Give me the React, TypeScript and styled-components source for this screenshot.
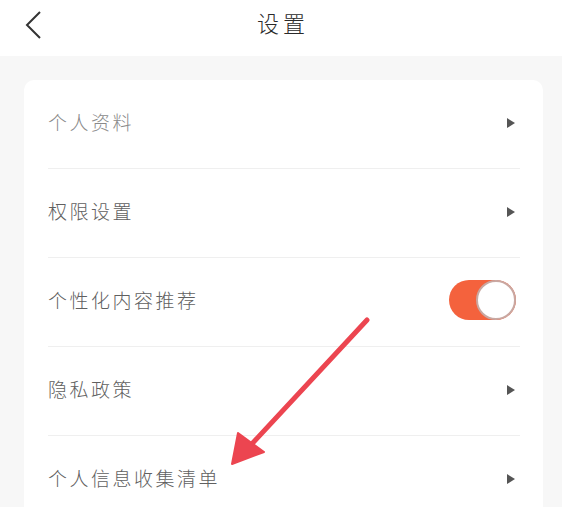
import * as React from 'react';
import styled, { createGlobalStyle } from 'styled-components';

const GlobalStyle = createGlobalStyle`
    html, body {
        margin: 0;
        padding: 0;
        background: #f7f7f7;
    }
    body {
        font-family: 'Noto Sans CJK SC', 'Noto Sans', sans-serif;
    }
`;

const Page = styled.div`
    position: relative;
    width: 562px;
    height: 507px;
    overflow: hidden;
    background: #f7f7f7;
`;

const Header = styled.header`
    height: 56px;
    background: #fff;
    display: grid;
    grid-template-columns: 56px 1fr 56px;
    align-items: center;
`;

const BackButton = styled.button`
    border: none;
    background: none;
    padding: 0 0 0 24px;
    height: 56px;
    display: flex;
    align-items: center;
    margin-top: -6px;
    cursor: pointer;
`;

const Title = styled.h1`
    margin: 0;
    text-align: center;
    font-size: 22px;
    font-weight: 300;
    letter-spacing: 4px;
    padding-left: 4px;
    color: #2a2a2a;
    line-height: 1;
    margin-top: -12px;
`;

const Body = styled.main`
    padding: 24px 19px 0 24px;
`;

const Card = styled.section`
    background: #fff;
    border-radius: 10px;
    overflow: hidden;
`;

const Row = styled.div<{ $last?: boolean }>`
    height: 88px;
    display: flex;
    align-items: center;
    justify-content: space-between;
    padding: 0 28px 0 24px;
    border-bottom: ${p => (p.$last ? 'none' : '1px solid transparent')};
    position: relative;
    &::after {
        content: '';
        display: ${p => (p.$last ? 'none' : 'block')};
        position: absolute;
        left: 24px;
        right: 23px;
        bottom: -1px;
        height: 1px;
        background: #efefef;
    }
`;

const Label = styled.span<{ $faint?: boolean }>`
    font-size: 19px;
    font-weight: 300;
    letter-spacing: 2.5px;
    margin-top: -5px;
    color: ${p => (p.$faint ? '#8a8a8a' : '#606060')};
`;

const Caret = styled.span`
    width: 0;
    height: 0;
    border-top: 5px solid transparent;
    border-bottom: 5px solid transparent;
    border-left: 8px solid #555;
    margin-top: -2px;
`;

const Switch = styled.span<{ $on: boolean }>`
    width: 67px;
    height: 40px;
    border-radius: 20px;
    background: ${p => (p.$on ? '#f4623d' : '#e0e0e0')};
    display: flex;
    justify-content: ${p => (p.$on ? 'flex-end' : 'flex-start')};
    margin-right: -1px;
    margin-top: -4px;
`;

const Knob = styled.span`
    width: 40px;
    height: 40px;
    box-sizing: border-box;
    border-radius: 50%;
    background: #fff;
    border: 2px solid #c9a8a2;
`;

const Pointer = styled.svg`
    position: absolute;
    left: 0;
    top: 0;
    pointer-events: none;
`;

const items = [
    { label: '个人资料', kind: 'link', faint: true },
    { label: '权限设置', kind: 'link' },
    { label: '个性化内容推荐', kind: 'switch' },
    { label: '隐私政策', kind: 'link' },
    { label: '个人信息收集清单', kind: 'link' },
];

const App = () => {
    const [on, setOn] = React.useState(true);

    return (
        <Page>
            <GlobalStyle />
            <Header>
                <BackButton aria-label="返回">
                    <svg width="18" height="28" viewBox="0 0 18 28">
                        <path d="M16 1 L3 14 L16 27" fill="none" stroke="#333" strokeWidth="2" strokeLinejoin="miter" />
                    </svg>
                </BackButton>
                <Title>设置</Title>
                <span />
            </Header>
            <Body>
                <Card>
                    {items.map((item, i) => (
                        <Row key={item.label} $last={i === items.length - 1}>
                            <Label $faint={item.faint}>{item.label}</Label>
                            {item.kind === 'switch' ? (
                                <Switch $on={on} onClick={() => setOn(!on)}>
                                    <Knob />
                                </Switch>
                            ) : (
                                <Caret />
                            )}
                        </Row>
                    ))}
                </Card>
            </Body>
            <Pointer width="562" height="507" viewBox="0 0 562 507">
                <line x1="367" y1="320" x2="250" y2="446" stroke="#ec4550" strokeWidth="5" strokeLinecap="round" />
                <polygon points="238,433 264,452 232,464" fill="#ec4550" stroke="#ec4550" strokeWidth="2" strokeLinejoin="round" />
            </Pointer>
        </Page>
    );
};

export default App;
